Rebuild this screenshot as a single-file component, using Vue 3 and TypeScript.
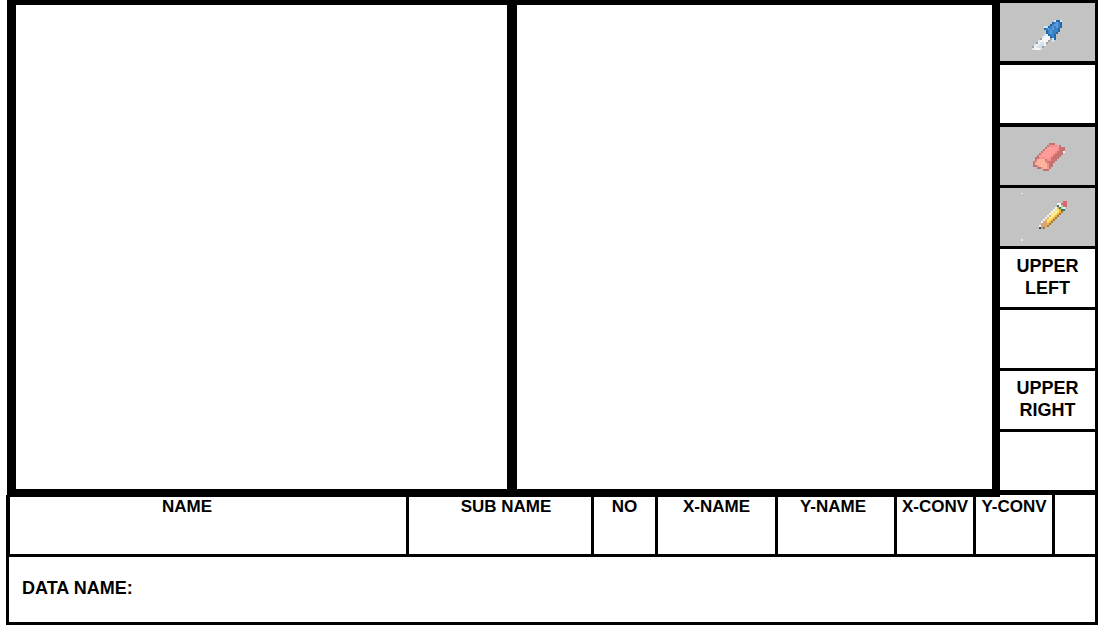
<script setup lang="ts">
import { ref } from 'vue'

interface Icon {
  id: string
  label: string
  x: number
  y: number
  rows: string[]
  specks: [number, number, number, number][]
}
interface Pixel {
  x: number
  y: number
  fill: string
}

const palette: Record<string, string> = {
  l: '#dbe5ee', w: '#f5f5f5', g: '#a0a0a0', s: '#cfe0ee',
  B: '#3a82c4', b: '#5a9bd8', D: '#1f68ae',
  p: '#f98f8f', q: '#ff9c9a', r: '#cd7272', R: '#bd7272', e: '#ffb39c', E: '#e49a8a',
  t: '#ddb0b0', y: '#ffe36b', Y: '#e6b450', o: '#a87838', c: '#fff0a8',
  G: '#347d55', h: '#b8d5c0', n: '#dba46f', k: '#454545', P: '#d66770', L: '#e5b3ba',
}

const dropper: Icon = {
  id: 'pick', label: 'Pick colour', x: 12, y: 15, specks: [],
  rows: [
    '...........lDDl',
    '..........DBbBD',
    '.........DBbbBD',
    '......lsDBbBbBD',
    '......DBbBbBBD.',
    '.......DBbBBBD.',
    '.......DBbBBD..',
    '......lwDBBD...',
    '.....lwwwDBD...',
    '....gwwwwglD...',
    '...lwwwwg.l....',
    '..gwlswg.......',
    '.lwlssw........',
    'gwlssg.........',
    'lwwwl..........',
  ],
}
const eraser: Icon = {
  id: 'erase', label: 'Eraser', x: 13, y: 14, specks: [],
  rows: [
    '........rRrt....',
    '.......rpppptr..',
    '......rqqqqqprrR',
    '.....rqqqqqqprRr',
    '....rqqqqqqprRrw',
    '...rqqqqqqprRrR.',
    '..rqqqqqqprRrR..',
    '.rrpppqqprRrR...',
    '.reeeerpprrR....',
    'rEeeeeErrRr.....',
    'reeeeeeErR......',
    'rREeeeeERr......',
    '..RREeeEr.......',
    '.....RRr........',
  ],
}
const pencil: Icon = {
  id: 'draw', label: 'Pencil', x: 19, y: 9,
  specks: [[1, 3, 2, 1], [1, 49, 2, 2]],
  rows: [
    '............L.',
    '...........LPP',
    '.........wwrPP',
    '.........GwhrP',
    '........wYGhw.',
    '.......wyyYGG.',
    '......wycyYo..',
    '.....wycyYo...',
    '....wYcyYo....',
    '...wYcyYo.....',
    '..wYyyYo......',
    '.wnnyYo.......',
    '.nnnYo........',
    'wnnno.........',
    'kgo...........',
  ],
}

function pixels(icon: Icon): Pixel[] {
  const out: Pixel[] = []
  icon.rows.forEach((row, j) => {
    Array.from(row).forEach((ch, i) => {
      if (palette[ch]) out.push({ x: icon.x + i * 2, y: icon.y + j * 2, fill: palette[ch] })
    })
  })
  return out
}

const fields = [
  { id: 'name', label: 'NAME' },
  { id: 'sub-name', label: 'SUB NAME' },
  { id: 'no', label: 'NO' },
  { id: 'x-name', label: 'X-NAME' },
  { id: 'y-name', label: 'Y-NAME' },
  { id: 'x-conv', label: 'X-CONV' },
  { id: 'y-conv', label: 'Y-CONV' },
]
const values = ref<Record<string, string>>({})
const upperLeft = ref('')
const upperRight = ref('')
const dataName = ref('')
const tools = [dropper, eraser, pencil]
const active = ref('')
</script>

<template>
  <main class="editor">
    <section class="workspace">
      <div class="boards">
        <div class="board"></div>
        <div class="board"></div>
      </div>
      <aside class="side">
        <template v-for="tool in tools" :key="tool.id">
          <button class="tool" :class="tool.id" type="button" :aria-label="tool.label" @click="active = tool.id">
            <svg width="55" height="54" viewBox="0 0 55 54" shape-rendering="crispEdges" aria-hidden="true">
              <rect v-for="(p, i) in pixels(tool)" :key="i" :x="p.x" :y="p.y" width="2" height="2" :fill="p.fill" />
              <rect v-for="(s, i) in tool.specks" :key="'s' + i" :x="s[0]" :y="s[1]" :width="s[2]" :height="s[3]" fill="#e8e8e8" />
            </svg>
          </button>
          <div v-if="tool.id === 'pick'" class="swatch"></div>
        </template>
        <label class="corner" for="upper-left">UPPER<br />LEFT</label>
        <input id="upper-left" v-model="upperLeft" type="text" />
        <label class="corner" for="upper-right">UPPER<br />RIGHT</label>
        <input id="upper-right" v-model="upperRight" type="text" />
      </aside>
    </section>

    <section class="fields">
      <div v-for="f in fields" :key="f.id" class="field" :class="f.id">
        <label :for="f.id">{{ f.label }}</label>
        <input :id="f.id" v-model="values[f.id]" type="text" />
      </div>
      <div class="field"></div>
    </section>

    <section class="data">
      <label for="data-name">DATA NAME:</label>
      <input id="data-name" v-model="dataName" type="text" />
    </section>
  </main>
</template>

<style>
body {
  margin: 0;
  background: #fff;
}
</style>

<style scoped>
.editor {
  box-sizing: border-box;
  display: grid;
  grid-template-rows: 1fr auto auto;
  min-height: 100vh;
  padding: 0 2px 0 6px;
  font-family: "Liberation Sans", Arial, sans-serif;
  font-size: 17px;
  font-weight: bold;
  line-height: 20px;
  color: #000;
}
input {
  box-sizing: border-box;
  min-width: 0;
  width: 100%;
  border: 0;
  padding: 0 8px;
  background: #fff;
  font: inherit;
}
.workspace {
  display: grid;
  grid-template-columns: 1fr 98px;
  margin-left: 1px;
}
.boards {
  position: relative;
  z-index: 1;
  display: grid;
  grid-template-columns: 491fr 475fr;
  gap: 10px;
  padding: 5px 8px 8px 9px;
  margin-bottom: -2px;
  background: #000;
}
.board {
  background: #fff;
}
.side {
  display: grid;
  grid-template-rows: repeat(2, 62fr) repeat(6, 61fr);
  padding: 3px 3px 2px 0;
  background: #000;
}
.side > * {
  margin-bottom: 3px;
}
.side > .pick,
.side > .swatch {
  margin-bottom: 4px;
}
.tool {
  display: flex;
  align-items: center;
  justify-content: center;
  border: 0;
  padding: 0;
  background: #c3c3c3;
}
.swatch {
  background: #fff;
}
.corner {
  display: flex;
  align-items: center;
  justify-content: center;
  padding-bottom: 2px;
  background: #fff;
  font-size: 18px;
  line-height: 22px;
  text-align: center;
}
.fields {
  display: grid;
  grid-template-columns: 396fr 182fr 61fr 117fr 116fr 76fr 76fr 40fr;
  gap: 3px;
  padding: 0 3px 3px 4px;
  background: #000;
}
.field {
  display: flex;
  flex-direction: column;
  min-width: 0;
  height: 59px;
  box-sizing: border-box;
  padding-top: 2px;
  background: #fff;
  text-align: center;
  white-space: nowrap;
}
.field input {
  flex: 1;
}
.field.name {
  padding-right: 42px;
}
.field.sub-name {
  padding-left: 12px;
}
.field.y-name {
  padding-right: 6px;
}
.data {
  display: flex;
  align-items: center;
  gap: 8px;
  box-sizing: border-box;
  height: 68px;
  border: 3px solid #000;
  border-top: 0;
  padding: 0 8px 4px 13px;
}
.data label {
  flex: none;
  font-size: 18px;
}
</style>
